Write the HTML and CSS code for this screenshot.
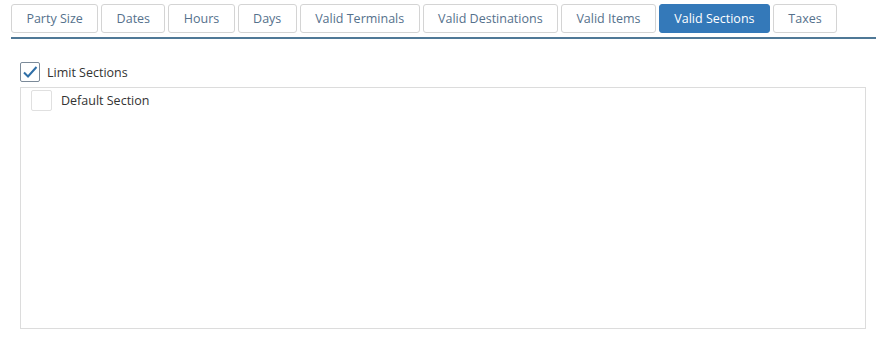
FILE: index.html
```html
<!DOCTYPE html>
<html>
<head>
  <meta charset="utf-8" />
  <title>Valid Sections</title>
  <link rel="stylesheet" href="styles.css">
</head>
<body>
  <div id="tabs">
    <div class="tab">Party Size</div>
    <div class="tab">Dates</div>
    <div class="tab">Hours</div>
    <div class="tab">Days</div>
    <div class="tab">Valid Terminals</div>
    <div class="tab">Valid Destinations</div>
    <div class="tab">Valid Items</div>
    <div class="tab active">Valid Sections</div>
    <div class="tab">Taxes</div>
  </div>
  <div id="panel">
    <label class="check">
      <span class="box checked">
        <svg width="16" height="14" viewBox="0 0 16 14"><path d="M2 7.5 L6 11.5 L14.5 2" fill="none" stroke="#2f6fa7" stroke-width="2"/></svg>
      </span>
      Limit Sections
    </label>
    <div id="list">
      <div class="item">
        <span class="box"></span>
        Default Section
      </div>
    </div>
  </div>
</body>
</html>
```

FILE: styles.css
```css
body {
  margin: 0;
  background: #fff;
  font-family: "Open Sans", sans-serif;
  font-size: 12.5px;
  color: #333;
}

#tabs {
  display: flex;
  gap: 3px;
  margin: 4px 7px 0 11px;
  padding-bottom: 4px;
  border-bottom: 2px solid #4f7896;
}

.tab {
  height: 27px;
  line-height: 27px;
  padding: 0 14.4px;
  border: 1px solid #d4d4d4;
  border-radius: 3px;
  color: #55718c;
  background: #fff;
}

.tab.active {
  background: #3479b9;
  border-color: #3479b9;
  color: #fff;
}

#panel {
  padding: 23px 17px 0 20px;
}

.check {
  display: flex;
  align-items: center;
  gap: 7px;
  height: 20px;
  color: #333;
}

.box {
  display: flex;
  align-items: center;
  justify-content: center;
  box-sizing: border-box;
  width: 20px;
  height: 20px;
  border: 1px solid #d6d6d6;
  border-radius: 2px;
  background: #fff;
}

.box.checked {
  border-color: #7b8a99;
}

#list {
  margin-top: 5px;
  height: 240px;
  border: 1px solid #dcdcdc;
}

.item {
  display: flex;
  align-items: center;
  gap: 9px;
  padding: 2px 10px;
  height: 21px;
}

.item .box {
  width: 21px;
  height: 21px;
  border-color: #e0e0e0;
}
```
